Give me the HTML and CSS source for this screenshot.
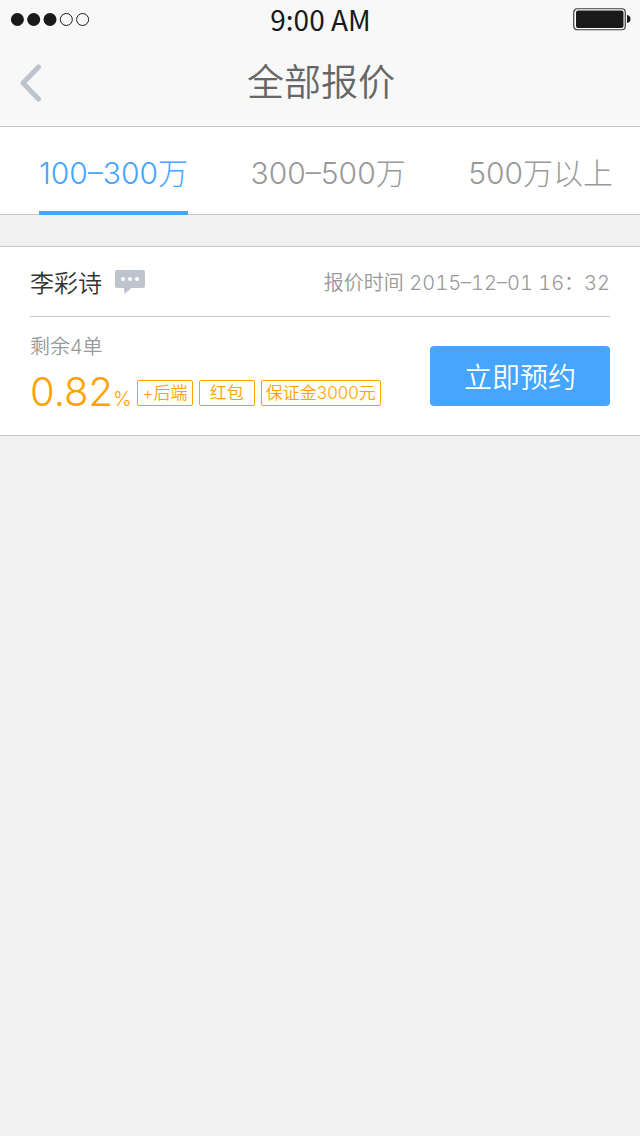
FILE: index.html
```html
<!DOCTYPE html>
<html lang="zh-CN">
<head>
<meta charset="utf-8">
<meta name="viewport" content="width=device-width, initial-scale=1">
<title>全部报价</title>
<link rel="stylesheet" href="styles.css">
</head>
<body>
<header class="header">
  <div class="status">
    <svg class="signal" width="80" height="14" viewBox="0 0 80 14" aria-hidden="true">
      <g fill="#1a1a1a"><circle cx="7.4" cy="6.500" r="6.5"/><circle cx="23.7" cy="6.500" r="6.5"/><circle cx="40" cy="6.500" r="6.5"/></g>
      <g fill="none" stroke="#1a1a1a"><circle cx="56.3" cy="6.500" r="6"/><circle cx="72.6" cy="6.500" r="6"/></g>
    </svg>
    <span class="clock">9:00 AM</span>
    <svg class="battery" width="58" height="24" viewBox="0 0 58 24" aria-hidden="true">
      <rect x=".75" y=".75" width="51.5" height="21" rx="3.5" fill="#fff" stroke="#3a3a3a" stroke-width="1.2"/>
      <rect x="3" y="2.500" width="47.5" height="17.500" rx="2" fill="#1a1a1a"/>
      <path d="M54 7q3.500 .6 3.500 4t-3.500 4z" fill="#1a1a1a"/>
    </svg>
  </div>
  <div class="navbar">
    <a class="back" href="#" aria-label="返回">
      <svg width="22" height="38" viewBox="0 0 22 38"><path d="M18.500 3 3 19 18.500 35" fill="none" stroke="#bdc4cd" stroke-width="5" stroke-linecap="round" stroke-linejoin="round"/></svg>
    </a>
    <h1 class="title">全部报价</h1>
  </div>
</header>
<nav class="tabs">
  <a class="tab tab-active" href="#" aria-current="page">100–300万</a>
  <a class="tab" href="#">300–500万</a>
  <a class="tab" href="#">500万以上</a>
</nav>
<main>
  <article class="card">
    <div class="card-head">
      <h2 class="name">李彩诗</h2>
      <a class="chat" href="#" aria-label="发消息">
        <svg width="30" height="24" viewBox="0 0 30 24"><path d="M2 0h26q2 0 2 2v14q0 2-2 2H16.500L9.500 24 9 18H2q-2 0-2-2V2Q0 0 2 0z" fill="#bdc4cd"/><g fill="#fff"><circle cx="8" cy="9" r="2.100"/><circle cx="15" cy="9" r="2.100"/><circle cx="22" cy="9" r="2.100"/></g></svg>
      </a>
      <p class="quoted">报价时间 <time class="time" datetime="2015-12-01T16:32">2015–12–01 16：32</time></p>
    </div>
    <div class="card-body">
      <div class="offer">
        <p class="left">剩余4单</p>
        <div class="rate-row">
          <span class="rate">0.82<span class="percent">%</span></span>
          <ul class="tags">
            <li class="tag">+后端</li>
            <li class="tag">红包</li>
            <li class="tag">保证金3000元</li>
          </ul>
        </div>
      </div>
      <button class="book" type="button">立即预约</button>
    </div>
  </article>
</main>
</body>
</html>
```

FILE: styles.css
```css
* {
  box-sizing: border-box;
}
body {
  margin: 0;
  min-height: 100vh;
  background: #f1f1f1;
  font-family: Inter, "Noto Sans CJK SC", sans-serif;
  font-weight: 350;
  color: #999;
}
h1, h2, p, ul {
  margin: 0;
  padding: 0;
  font-weight: 350;
}
a {
  color: inherit;
  text-decoration: none;
}
svg {
  display: block;
}
.header {
  background: #f8f8f8;
  border-bottom: 1px solid #c8c8c8;
}
.status {
  display: grid;
  grid-template-columns: 1fr auto 1fr;
  align-items: center;
  height: 39px;
  padding: 0 9px 0 10px;
}
.clock {
  font: 400 28px/36px "Noto Sans CJK SC", sans-serif;
  margin-bottom: 2px;
  color: #1a1a1a;
}
.battery {
  justify-self: end;
}
.navbar {
  display: grid;
  grid-template-columns: 1fr auto 1fr;
  align-items: center;
  height: 87px;
  padding: 0 18px 0 20px;
}
.back {
  justify-self: start;
}
.title {
  font-size: 37px;
  line-height: 80px;
  color: #666;
}
.tabs {
  display: flex;
  justify-content: space-between;
  padding: 0 27px 0 39px;
  background: #fff;
  border-bottom: 1px solid #c8c8c8;
}
.tab {
  height: 88px;
  margin-bottom: -1px;
  font-size: 30px;
  font-weight: 300;
  line-height: 92px;
}
.tab-active {
  color: #45a5ff;
  border-bottom: 4px solid #45a5ff;
}
.card {
  margin-top: 31px;
  padding: 0 30px;
  background: #fff;
  border: solid #c8c8c8;
  border-width: 1px 0;
}
.card-head {
  display: flex;
  align-items: center;
  height: 70px;
  border-bottom: 1px solid #c8c8c8;
}
.name {
  font-size: 24px;
  color: #333;
}
.chat {
  margin-left: 13px;
}
.quoted {
  margin-left: auto;
  font-size: 20px;
}
.time {
  font-variant-numeric: tabular-nums;
}
.card-body {
  display: flex;
  justify-content: space-between;
  align-items: center;
  height: 118px;
}
.left {
  font-size: 20px;
  line-height: 32px;
}
.rate-row {
  display: flex;
  align-items: center;
  color: #ffa200;
}
.rate {
  font-size: 40px;
  line-height: 58px;
}
.percent {
  font-size: 20px;
  line-height: 20px;
}
.tags {
  display: flex;
  gap: 6px;
  margin: 2px 0 0 5px;
  list-style: none;
}
.tag {
  padding: 0 4px;
  min-width: 56px;
  border: 1px solid #ffa200;
  border-radius: 2px;
  font-size: 17px;
  line-height: 24px;
  text-align: center;
}
.book {
  width: 180px;
  height: 60px;
  border: 0;
  border-radius: 4px;
  background: #45a5ff;
  color: #fff;
  font: inherit;
  font-size: 28px;
}
```
